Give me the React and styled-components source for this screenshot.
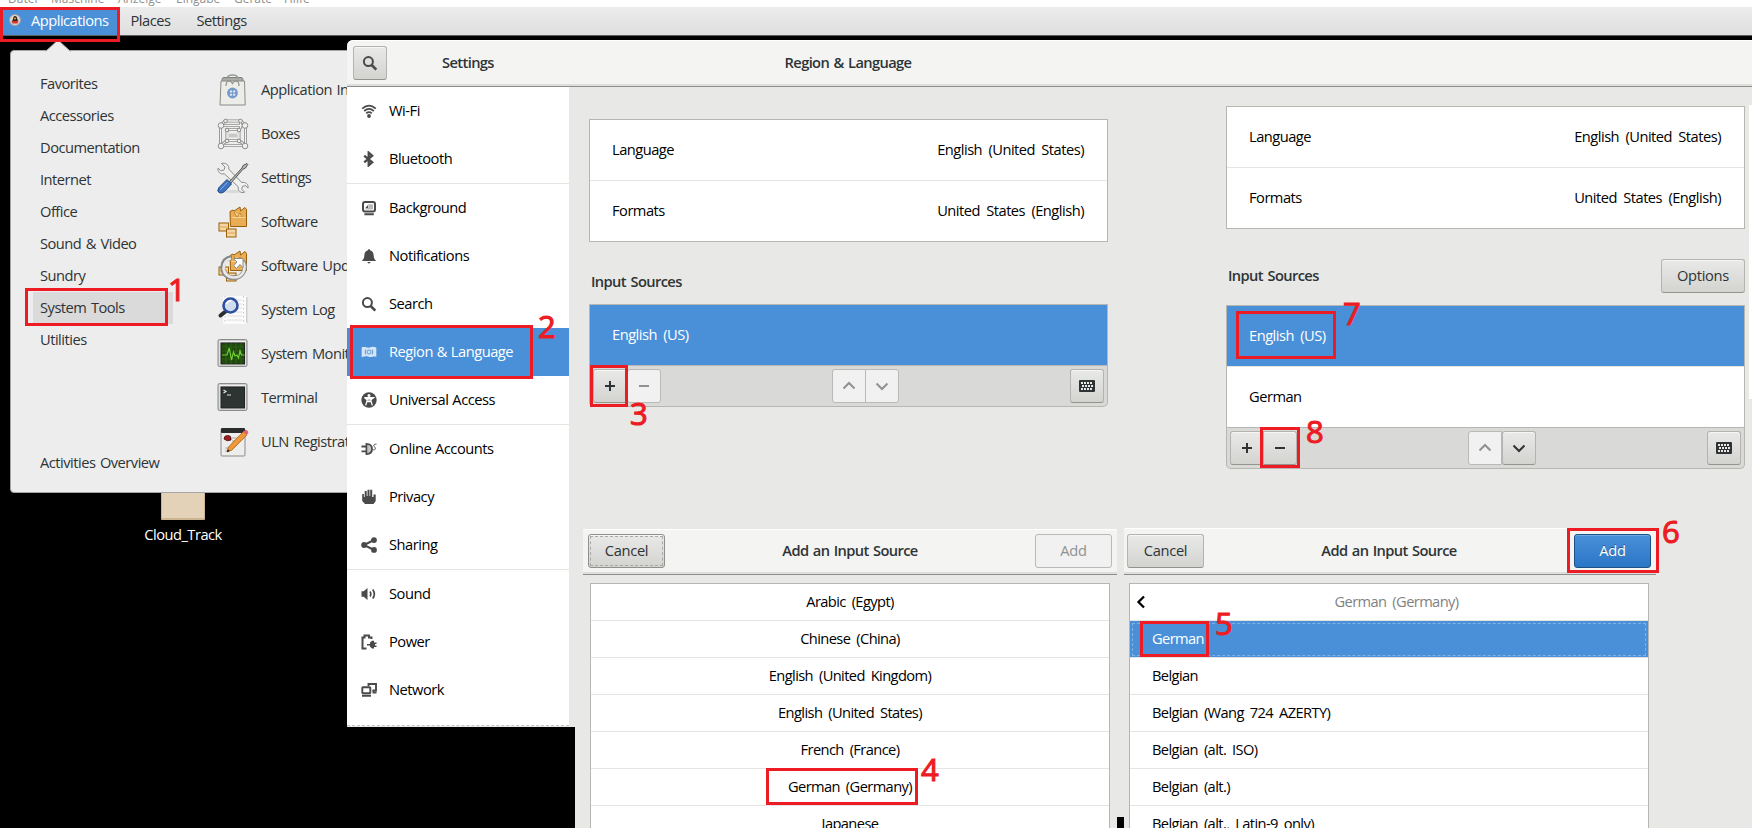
import React from "react";
import styled, { createGlobalStyle, css } from "styled-components";

const Global = createGlobalStyle`
  * { box-sizing: border-box; }
  body { margin: 0; background: #000; overflow: hidden; }
  svg { display: block; flex: none; }
`;

const BLUE = "#4a90d9";
const BG = "#e8e8e6";
const RED = "#ed1c24";

const Desktop = styled.div`
  position: relative;
  width: 1752px;
  height: 828px;
  overflow: hidden;
  background: #000;
  color: #2e3436;
  font: 14.67px/20px "Open Sans", "Noto Sans", sans-serif;
  letter-spacing: -0.5px;
  word-spacing: 1.2px;
  white-space: nowrap;
`;

/* Host window menu and desktop panel */
const HostMenu = styled.div`
  display: flex;
  gap: 16px;
  height: 7px;
  padding-left: 8px;
  overflow: hidden;
  background: #fff;
  color: #8f8f8f;
  font-size: 12px;
  line-height: 16px;
  letter-spacing: 0;
`;
const HostItem = styled.span`
  width: ${(p) => p.$w}px;
  margin-top: -9px;
`;
const TopBar = styled.div`
  display: flex;
  height: 29px;
  background: linear-gradient(#ececec, #dedede);
  border-bottom: 1px solid #5c5f5d;
`;
const TopItem = styled.div`
  display: flex;
  align-items: center;
  gap: 10px;
  height: 28px;
  padding: ${(p) => p.$pad};
  ${(p) => p.$active && css`background: ${BLUE}; color: #fff; margin-left: 2px;`}
`;

/* Applications menu */
const MenuPopup = styled.div`
  position: absolute;
  left: 10px;
  top: 50px;
  display: flex;
  width: 400px;
  height: 443px;
  background: #ededed;
  border: 1px solid #a5a5a3;
  border-radius: 4px;
`;
const MenuArrow = styled.svg`
  position: absolute;
  left: 34px;
  top: -12px;
`;
const Categories = styled.div`
  display: flex;
  flex-direction: column;
  width: 140px;
  margin-left: 22px;
  padding: 17px 0 13px;
`;
const Category = styled.div`
  height: 32px;
  padding-left: 7px;
  line-height: 30px;
  background: ${(p) => (p.$active ? "#d9dad9" : "transparent")};
  ${(p) => p.$last && css`margin-top: auto;`}
`;
const AppList = styled.div`
  padding: 17px 0 0 44px;
`;
const AppRow = styled.div`
  display: flex;
  align-items: center;
  gap: 12px;
  height: 44px;
`;
const Label = styled.span`
  margin-bottom: 2px;
`;

const Folder = styled.div`
  position: absolute;
  left: 133px;
  top: 480px;
  display: flex;
  flex-direction: column;
  align-items: center;
  gap: 4px;
  width: 100px;
  color: #fff;
`;
const FolderShape = styled.div`
  width: 44px;
  height: 40px;
  background: #e3d1b8;
  border: 1px solid #cdb491;
  border-bottom-width: 2px;
  border-radius: 1px;
`;

/* Settings window */
const SettingsWindow = styled.div`
  position: absolute;
  left: 347px;
  top: 40px;
  width: 1405px;
  height: 788px;
`;
const HeaderBar = styled.div`
  display: flex;
  align-items: center;
  height: 47px;
  padding: 0 6px;
  background: #f4f4f3;
  border-bottom: 1px solid #8e8e8b;
  box-shadow: inset 0 -2px #dededc, inset 0 1px #fff;
  border-radius: 6px 0 0 0;
`;
const Title = styled.div`
  font-weight: 600;
  letter-spacing: -0.62px;
  text-align: center;
  flex: ${(p) => (p.$w ? "none" : 1)};
  width: ${(p) => (p.$w ? p.$w + "px" : "auto")};
  margin-left: ${(p) => p.$ml || 0}px;
  margin-bottom: 2px;
`;
const Body = styled.div`
  display: flex;
  align-items: flex-start;
`;
const SideColumn = styled.div`
  width: 228px;
  height: 640px;
  padding-right: 6px;
  background: ${BG};
`;
const Sidebar = styled.div`
  height: 639px;
  background: #fff;
  border-bottom: 1px dashed #c4c4c2;
  letter-spacing: -0.47px;
  word-spacing: 0.5px;
`;
const SideItem = styled.div`
  display: flex;
  align-items: center;
  gap: 12px;
  height: ${(p) => (p.$sep ? 49 : 48)}px;
  padding-left: 14px;
  border-bottom: ${(p) => (p.$sep ? "1px solid #e4e4e3" : "none")};
  background: ${(p) => (p.$active ? BLUE : "#fff")};
  color: ${(p) => (p.$active ? "#fff" : "#000")};
`;
const SideIcon = styled.svg`
  color: ${(p) => (p.$active ? "#d6e6f8" : "#4a4a4a")};
`;
const Content = styled.div`
  display: flex;
  flex: 1;
  align-items: flex-start;
  justify-content: space-between;
  height: 741px;
  padding: 19px 0 0 14px;
  background: ${BG};
`;
const Panel = styled.div`
  width: 519px;
  margin-top: ${(p) => p.$mt || 0}px;
  word-spacing: 3px;
`;
const RightSide = styled.div`
  display: flex;
  gap: 4px;
`;
const NextShot = styled.div`
  width: 3px;
  height: 294px;
  margin-top: -1px;
  background: #fff;
`;
const Card = styled.div`
  background: #fff;
  border: 1px solid #b6b6b3;
`;
const CardRow = styled.div`
  display: flex;
  align-items: center;
  justify-content: space-between;
  height: ${(p) => (p.$sep ? 61 : 60)}px;
  padding: 0 23px 2px 22px;
  border-bottom: ${(p) => (p.$sep ? "1px solid #e4e4e3" : "none")};
  background: ${(p) => (p.$active ? BLUE : "#fff")};
  color: ${(p) => (p.$active ? "#fff" : "#000")};
`;
const SectionHead = styled.div`
  display: flex;
  align-items: center;
  justify-content: space-between;
  height: 34px;
  margin: ${(p) => p.$m};
  padding-left: 2px;
  font-weight: 600;
  letter-spacing: -0.6px;
  word-spacing: 1.2px;
`;
const ListBar = styled.div`
  display: flex;
  align-items: center;
  justify-content: space-between;
  height: 41px;
  padding: 0 3px;
  background: #d9d9d7;
  border: 1px solid #b6b6b3;
  border-top: 0;
  border-radius: 0 0 5px 5px;
`;
const Group = styled.div`
  display: flex;
  margin-left: ${(p) => p.$ml || 0}px;
`;
const BarSide = styled.div`
  display: flex;
  flex: 1;
  justify-content: ${(p) => (p.$end ? "flex-end" : "flex-start")};
`;
const Button = styled.div`
  display: flex;
  align-items: center;
  justify-content: center;
  width: ${(p) => p.$w || 34}px;
  height: 34px;
  padding-bottom: ${(p) => (p.$w ? 2 : 0)}px;
  font-weight: 400;
  letter-spacing: -0.3px;
  color: #2e3436;
  background: linear-gradient(#e9e9e8, #d3d3d0);
  border: 1px solid #b3b3af;
  border-bottom-color: #94948f;
  border-radius: 3px;
  box-shadow: inset 0 1px #f6f6f5;
  outline-offset: -3px;
  ${(p) => p.$focus && css`outline: 1px dashed #a9aaa7; border-color: #8f908c;`}
  ${(p) => p.$off && css`background: #f1f1f1; color: #8f9291; border-color: #b9b9b6; box-shadow: none;`}
  ${(p) => p.$primary && css`
    background: linear-gradient(#4a90d9, #2a76c6);
    color: #fff; border-color: #1c5187; box-shadow: inset 0 1px #6ea8e2;
    text-shadow: 0 -1px rgba(0, 0, 0, 0.4);`}
  ${Group} &:first-child { border-radius: 3px 0 0 3px; }
  ${Group} & + & { border-radius: 0 3px 3px 0; margin-left: -1px; }
`;

/* Dialogs */
const Dialog = styled.div`
  position: absolute;
  left: ${(p) => p.$x}px;
  top: 528px;
  width: ${(p) => p.$w}px;
  height: 300px;
`;
const DialogHeader = styled(HeaderBar)`
  height: ${(p) => (p.$short ? 46 : 47)}px;
  margin-top: ${(p) => (p.$short ? 1 : 0)}px;
  padding: ${(p) => (p.$short ? "0 5px 1px" : "0 5px 0 3px")};
  border-radius: 2px 2px 0 0;
`;
const DialogList = styled(Card)`
  width: 520px;
  height: 260px;
  margin: 8px 0 0 ${(p) => p.$ml}px;
  letter-spacing: -0.6px;
  word-spacing: 2.7px;
`;
const ListRow = styled.div`
  position: relative;
  display: flex;
  align-items: center;
  justify-content: ${(p) => (p.$left ? "flex-start" : "center")};
  height: 37px;
  padding-left: ${(p) => (p.$left ? 22 : p.$pl || 0)}px;
  padding-bottom: 2px;
  border-bottom: 1px solid #e4e4e3;
  color: ${(p) => (p.$active ? "#fff" : p.$dim ? "#7f8283" : "#000")};
  background: ${(p) => (p.$active ? BLUE : "transparent")};
  outline-offset: -3px;
  ${(p) => p.$active && css`outline: 1px dashed #80b1e4;`}
`;
const Back = styled.svg`
  position: absolute;
  left: 6px;
  top: 11px;
`;
const Sliver = styled.div`
  position: absolute;
  left: 1117px;
  top: 817px;
  width: 7px;
  height: 11px;
  background: #000;
`;

/* Step markers laid over the windows */
const Mark = styled.div`
  position: absolute;
  left: ${(p) => p.$x}px;
  top: ${(p) => p.$y}px;
  width: ${(p) => p.$w}px;
  height: ${(p) => p.$h}px;
  border: 3px solid ${RED};
`;
const Step = styled.div`
  position: absolute;
  left: ${(p) => p.$x}px;
  top: ${(p) => p.$y}px;
  color: ${RED};
  font-size: 31px;
  line-height: 32px;
  letter-spacing: 0;
  -webkit-text-stroke: 1.1px ${RED};
`;

const stroke = (w, extra) => ({ fill: "none", stroke: "currentColor", strokeWidth: w, ...extra });

const sideIcons = {
  wifi: (
    <g {...stroke(1.7)}>
      <path d="M1.2 5.6Q8 -0.4 14.8 5.6" />
      <path d="M3.2 8Q8 3.6 12.8 8" />
      <path d="M5.2 10.3Q8 7.9 10.8 10.3" />
      <circle cx="8" cy="13" r="1.9" fill="currentColor" stroke="none" />
    </g>
  ),
  bluetooth: <path d="M3.2 4.6L11.2 11.3L7.7 14.3V1.7L11.2 4.7L3.2 11.4" {...stroke(2.3)} />,
  background: (
    <>
      <rect x="2" y="2" width="12" height="9.6" rx="2" {...stroke(2)} />
      <path d="M7.3 4.3h4.7v5.2H4.4V8h2.9z" fill="#b9b9b9" />
      <path d="M4.4 8L7 5v3zM3.4 13.3h9.4v2H3.4z" fill="currentColor" />
    </>
  ),
  bell: <path d="M8 1.3c.9 0 1.3.6 1.4 1.2C12 3.3 12.6 5.500 12.700 8c.1 2 .8 3.200 2 4.200v.8H1.300v-.8c1.200-1 1.900-2.200 2-4.200.1-2.500.7-4.700 3.300-5.500C6.700 1.900 7.100 1.300 8 1.300zM6.500 14h3c0 .8-.6 1.400-1.500 1.400S6.500 14.800 6.500 14z" fill="currentColor" />,
  search: (
    <g {...stroke(2)}>
      <circle cx="6.4" cy="6.600" r="4.500" />
      <path d="M9.700 10l4.600 4.600" strokeWidth="2.600" />
    </g>
  ),
  region: (
    <>
      <path d="M.7 3.500c3-1.400 5 1 8 0 2.400-.9 4.400-.8 6.600 0v9.300c-3-1.200-4.500.8-7.500 0-2.500-.8-4.600-.6-7.100.5z" fill="currentColor" />
      <g fill="none" stroke="#5c99da" strokeWidth="1">
        <circle cx="8" cy="8" r="2" />
        <path d="M4.800 5.500Q3.400 8 4.800 10.500M11.200 5.500Q12.600 8 11.200 10.500" />
      </g>
    </>
  ),
  access: (
    <>
      <circle cx="8" cy="8" r="7.700" fill="currentColor" />
      <circle cx="8" cy="3.500" r="1.500" fill="#fff" />
      <path d="M3.400 5.600h9.200L9.700 7.900l1.600 5.500M8 5.800v3.400M6.300 7.900l-1.600 5.500M3.400 5.600l2.900 2.300M6.200 6.500h3.600v3.200H6.200z" fill="none" stroke="#fff" strokeWidth="1.300" />
    </>
  ),
  online: (
    <>
      <path d="M5 2.300c5 0 6.800 2.600 6.800 5.700S10 13.700 5 13.700z" fill="#c4c4c4" />
      <path d="M5.400 2v12M5.400 3c4 0 5.600 2.200 5.600 5s-1.600 5-5.600 5" {...stroke(1.700)} />
      <path d="M.5 5.500h4.500M.5 10.300h4.500" {...stroke(1.800)} />
      <path d="M15.500 3.200c-4-.2-2.700 2-1.700 3 1.300 1.500.5 2.800-1.600 2.700" {...stroke(1)} />
    </>
  ),
  privacy: <path d="M1.200 5h1.700v3h.8V2h2v5h.8V.8h2V7h.7V.8h2V8h1.300V5.500h2.200v6.500L12.500 15H4L1.200 12z" fill="currentColor" />,
  share: (
    <>
      <path d="M13 3L3 8l10 5" {...stroke(2)} />
      <g fill="currentColor"><circle cx="13" cy="3.100" r="2.900" /><circle cx="3.100" cy="8" r="2.900" /><circle cx="13" cy="12.900" r="2.900" /></g>
    </>
  ),
  sound: (
    <>
      <path d="M.5 5.300h2.200L6.500 2v12L2.700 10.700H.5z" fill="currentColor" />
      <path d="M9 5.500q1.600 2.500 0 5M11.700 3.400q3.300 4.600 0 9.200" {...stroke(1.700)} />
    </>
  ),
  power: (
    <>
      <path d="M5.500 14.500H1.500V3.500H3.500V1.500H8V3.500h2.500V5" {...stroke(2)} />
      <path d="M6 9.900h3V8.500l2-1.700h2v1.600h2.500v1.500H14v1.500h1.500v1.500H13v1.600h-2l-2-1.700v-1.400H6z" fill="currentColor" />
    </>
  ),
  network: (
    <g {...stroke(1.900)}>
      <path d="M7.500 4V2H15v6.500h-3.500" />
      <rect x="1.300" y="5.200" width="8" height="6" rx=".6" />
      <path d="M1 13.800h9M12.500 8v2.500h3" />
    </g>
  ),
};

const sideItems = [
  ["wifi", "Wi-Fi"],
  ["bluetooth", "Bluetooth", true],
  ["background", "Background"],
  ["bell", "Notifications"],
  ["search", "Search"],
  ["region", "Region & Language"],
  ["access", "Universal Access", true],
  ["online", "Online Accounts"],
  ["privacy", "Privacy"],
  ["share", "Sharing", true],
  ["sound", "Sound"],
  ["power", "Power"],
  ["network", "Network"],
];

const packageBoxes = (
  <g stroke="#9a5e08" strokeWidth="1">
    <path d="M13 5.500l3-1.500 1 1 6-4 .5 4 4.500-3.500 1.500 2V20.500H13.500z" fill="#e9ad55" />
    <path d="M14.500 11.500h14" stroke="#f6d49a" />
    <path d="M17 6l3 5 3-4 2 4" fill="#f9e3bd" stroke="#c07f1c" />
    <rect x="2" y="17" width="9.500" height="8" fill="#f3d6a4" />
    <rect x="9.500" y="23" width="9.500" height="8" fill="#f3d6a4" />
    <path d="M3 21h7.500M10.500 27h7.500" stroke="#e0a44a" />
  </g>
);
const monitor = (fill) => (
  <>
    <rect x="1" y="1.500" width="29" height="27" rx="1.500" fill="#cfcfcf" stroke="#8a8c88" />
    <rect x="3" y="3.500" width="25" height="23" fill="none" stroke="#efefef" />
    <rect x="4" y="5" width="23.500" height="21" fill={fill} stroke="#222" />
  </>
);

const appIcons = {
  installer: (
    <>
      <rect x="5" y="3.500" width="21" height="6" rx="2" fill="#a9aba7" stroke="#7f817d" />
      <path d="M10 5q0-4 5.500-4T21 5" fill="none" stroke="#9a9c98" strokeWidth="1.500" />
      <path d="M4 7h23.500l.7 24H3z" fill="#ecece9" stroke="#8b8d88" />
      <path d="M9 12q0-5 3-5 2 0 3.500 2.500Q17 7 19 7q3 0 3 5" fill="none" stroke="#8b8d88" strokeWidth="1.200" />
      <circle cx="15.500" cy="19" r="5.400" fill="#7499cc" />
      <path d="M13.200 16.700h1.500v1.500h-1.500zM16.400 16.700h1.500v1.500h-1.500zM13.200 19.900h1.500v1.500h-1.500zM16.400 19.900h1.500v1.500h-1.500z" fill="#e8eef8" stroke="#e8eef8" strokeWidth=".5" />
    </>
  ),
  boxes: (
    <>
      <g fill="none" stroke="#8c8d8b" strokeWidth="3"><path d="M3.500 7.500h25v20h-25zM8 3h15.500v8M8 3l-4 4M24 3l4 4M10 11.500h12v11H10zM3.500 27.500l6.500-5M28.500 27.500l-6.500-5" /></g>
      <g fill="none" stroke="#f3f3f2" strokeWidth="1.300"><path d="M3.500 7.500h25v20h-25zM8 3h15.500v8M8 3l-4 4M24 3l4 4M10 11.500h12v11H10zM3.500 27.500l6.500-5M28.500 27.500l-6.500-5" /></g>
      <rect x="11" y="15" width="10" height="5" fill="#c8c9c7" stroke="#f3f3f2" />
      <g fill="#efefee" stroke="#8c8d8b"><circle cx="4" cy="7.500" r="2.800" /><circle cx="28" cy="7.500" r="2.800" /><circle cx="4" cy="28" r="2.800" /><circle cx="28" cy="28" r="2.800" /><circle cx="8.500" cy="3" r="1.800" /><circle cx="23.500" cy="3" r="1.800" /><circle cx="10" cy="12" r="1.800" /><circle cx="22" cy="12" r="1.800" /><circle cx="10" cy="23" r="1.800" /><circle cx="22" cy="23" r="1.800" /></g>
    </>
  ),
  settings: (
    <>
      <ellipse cx="16" cy="29.500" rx="13" ry="1.500" fill="#d8d8d8" />
      <path d="M4.500 1.500L8 5l-1 3-3.200.8L1 6.200c-.6 3.500 2.200 6.600 6.300 5.600l14 13c-.8 4 2.500 6.600 6.200 5.500l-2.800-3 .8-3 3.200-.7 2.300 2.500c.8-3.800-2.600-6.500-6.300-5.600l-13-13.500C12.400 3 8.500.3 4.500 1.500z" fill="#f0f0ef" stroke="#8a8c89" />
      <path d="M12 20L25 6l1-2.500L30 1.500l.8.8L28.500 6 26 7.200 13.500 21.500z" fill="#b5b7b4" stroke="#555855" />
      <path d="M10 17.500l4.500 4.500-7 7.500q-3 2.500-5.500 1t0-5z" fill="#3f75c0" stroke="#1f4684" />
      <path d="M3.500 27.500l7-7.300" stroke="#8fb4e6" />
    </>
  ),
  software: packageBoxes,
  updates: (
    <>
      {packageBoxes}
      <path d="M20 26.500c-6 3.500-15-1-14.500-9.500C6 11 10 8 15 7.500" fill="none" stroke="#84868a" strokeWidth="4.400" />
      <path d="M26 11c4.500 7 0 17.500-10 17-5-.3-9-4.500-9.500-9" fill="none" stroke="#8e908d" strokeWidth="4.400" />
      <path d="M26 12c4 7-.5 16-10 15.500-5-.3-9-4-9.500-9C6.300 13 10 9 14 8.500" fill="none" stroke="#e9e9e8" strokeWidth="2.600" />
      <path d="M16.500 8.500h9.500v9l-3-3-3.500 4-2.800-2.800L20 12z" fill="#fff" stroke="#8a8c89" />
    </>
  ),
  log: (
    <>
      <rect x="6" y="2" width="24" height="28" fill="#fbfbfb" />
      <path d="M8 2v28M26.500 2v28" stroke="#c6c6c6" strokeDasharray="1.500 2.500" />
      <path d="M10 6h15M10 10h15M10 14h15M10 18h15M10 22h15M10 26h15" stroke="#dedede" />
      <path d="M29.800 3v26" stroke="#bcbcbc" />
      <path d="M8.500 17.500l-5 4" stroke="#2b2e2c" strokeWidth="4" strokeLinecap="round" />
      <circle cx="13.500" cy="11.500" r="7" fill="#cfdcec" stroke="#2e4d9e" strokeWidth="2.600" />
      <path d="M9.500 10q1.500-3.500 5-3.500" fill="none" stroke="#fff" strokeWidth="1.500" />
    </>
  ),
  monitor: (
    <>
      {monitor("#1e4a0d")}
      <path d="M5 9h22M5 13h22M5 21h22M9 5v21M14 5v21M19 5v21M24 5v21" stroke="#2e6417" strokeWidth=".8" />
      <path d="M5 17h5l2.200-7 2.300 12 2-8 1.500 4 2-1 1.500 3 1.500-7 1.500 4h3" fill="none" stroke="#6fce34" strokeWidth="1.200" />
    </>
  ),
  terminal: (
    <>
      {monitor("#2d3533")}
      <path d="M6.500 8l2.500 1.500L6.500 11M10 13h4" fill="none" stroke="#dfe3e1" strokeWidth="1.200" />
    </>
  ),
  uln: (
    <>
      <rect x="4" y="3" width="24" height="27" rx="1" fill="#ededec" stroke="#8b8d8a" />
      <rect x="4" y="2" width="24" height="5" rx="1" fill="#2a2c2b" />
      <path d="M15 12h9M15 15h7M8 22h6M8 25h4" stroke="#a9aaa8" />
      <path d="M7 13q0-3.500 3.500-3.500T14 12v2q-4 2-7-1z" fill="#a21a22" stroke="#300" strokeWidth=".7" />
      <path d="M10 26l1.500-5L26.500 5.500l3.500 3.300L15 24z" fill="#f0993a" stroke="#a85c10" strokeWidth=".8" />
      <path d="M26 6l2-1.800q1.200-.8 2.600.5t.4 2.500l-1.500 1.800z" fill="#e2626c" />
      <path d="M10 26l.8-2.700 1.900 1.800z" fill="#111" />
    </>
  ),
};

const apps = [
  ["installer", "Application Installer"],
  ["boxes", "Boxes"],
  ["settings", "Settings"],
  ["software", "Software"],
  ["updates", "Software Update"],
  ["log", "System Log"],
  ["monitor", "System Monitor"],
  ["terminal", "Terminal"],
  ["uln", "ULN Registration"],
];
const categories = ["Favorites", "Accessories", "Documentation", "Internet", "Office", "Sound & Video", "Sundry", "System Tools", "Utilities"];

const Glyph = ({ d }) => (
  <svg width="16" height="16" viewBox="0 0 16 16"><path d={d} fill="none" stroke="currentColor" strokeWidth="2" /></svg>
);
const PLUS = "M8 3v10M3 8h10";
const MINUS = "M3 8h10";
const UP = "M2.500 10.500L8 5l5.500 5.500";
const DOWN = "M2.500 5.500L8 11l5.500-5.500";
const Keyboard = () => (
  <svg width="16" height="16" viewBox="0 0 16 16">
    <rect x="0" y="2" width="16" height="12" rx="1" fill="currentColor" />
    <path d="M2 5h12M3 8h11M2 11h12" stroke="#e9e9e8" strokeWidth="1.800" strokeDasharray="2 1" />
  </svg>
);

const LocaleCard = () => (
  <Card>
    <CardRow $sep><span>Language</span><span>English (United States)</span></CardRow>
    <CardRow><span>Formats</span><span>United States (English)</span></CardRow>
  </Card>
);
const SourceBar = ({ many }) => (
  <ListBar>
    <BarSide>
      <Group><Button><Glyph d={PLUS} /></Button><Button $off={!many}><Glyph d={MINUS} /></Button></Group>
    </BarSide>
    <Group $ml={33}><Button $off><Glyph d={UP} /></Button><Button $off={!many}><Glyph d={DOWN} /></Button></Group>
    <BarSide $end><Button><Keyboard /></Button></BarSide>
  </ListBar>
);

export default function App() {
  return (
    <Desktop>
      <Global />
      <HostMenu>
        <HostItem $w={27}>Datei</HostItem>
        <HostItem $w={51}>Maschine</HostItem>
        <HostItem $w={42}>Anzeige</HostItem>
        <HostItem $w={42}>Eingabe</HostItem>
        <HostItem $w={34}>Geräte</HostItem>
        <HostItem $w={26}>Hilfe</HostItem>
      </HostMenu>
      <TopBar>
        <TopItem $active $pad="0 10px 2px 7px">
          <svg width="12" height="12" viewBox="0 0 12 12">
            <circle cx="6" cy="6" r="5.500" fill="#d8d5d2" stroke="#a89f9a" strokeWidth=".8" />
            <path d="M4 5.500Q4 2 6 2t2.300 3l1 1.500-3.300 1-3-.5z" fill="#2b2320" />
            <path d="M2.500 7h7L8.500 9.500h-5z" fill="#d8342a" />
            <circle cx="6" cy="4.600" r="1" fill="#f0a040" />
          </svg>
          Applications
        </TopItem>
        <TopItem $pad="0 0 2px 12px">Places</TopItem>
        <TopItem $pad="0 0 2px 26px">Settings</TopItem>
      </TopBar>

      <Folder><FolderShape />Cloud_Track</Folder>

      <MenuPopup>
        <MenuArrow width="26" height="13"><path d="M.5 12.500L13 1l12.500 11.500" fill="#ededed" stroke="#a5a5a3" /></MenuArrow>
        <Categories>
          {categories.map((c) => <Category key={c} $active={c === "System Tools"}>{c}</Category>)}
          <Category $last>Activities Overview</Category>
        </Categories>
        <AppList>
          {apps.map(([icon, label]) => (
            <AppRow key={icon}>
              <svg width="32" height="32" viewBox="0 0 32 32">{appIcons[icon]}</svg>
              <Label>{label}</Label>
            </AppRow>
          ))}
        </AppList>
      </MenuPopup>

      <SettingsWindow>
        <HeaderBar>
          <Button><SideIcon as="svg" width="16" height="16" viewBox="0 0 16 16">{sideIcons.search}</SideIcon></Button>
          <Title $w={100} $ml={31}>Settings</Title>
          <Title $w={200} $ml={230}>Region &amp; Language</Title>
        </HeaderBar>
        <Body>
          <SideColumn>
            <Sidebar>
              {sideItems.map(([icon, label, sep]) => (
                <SideItem key={icon} $sep={sep} $active={icon === "region"}>
                  <SideIcon width="16" height="16" viewBox="0 0 16 16" $active={icon === "region"}>{sideIcons[icon]}</SideIcon>
                  <Label>{label}</Label>
                </SideItem>
              ))}
            </Sidebar>
          </SideColumn>
          <Content>
            <Panel $mt={13}>
              <LocaleCard />
              <SectionHead $m="22px 0 6px">Input Sources</SectionHead>
              <Card><CardRow $active>English (US)</CardRow></Card>
              <SourceBar />
            </Panel>
            <RightSide>
              <Panel>
                <LocaleCard />
                <SectionHead $m="30px 0 12px"><Label>Input Sources</Label><Button $w={84}>Options</Button></SectionHead>
                <Card>
                  <CardRow $sep $active>English (US)</CardRow>
                  <CardRow>German</CardRow>
                </Card>
                <SourceBar many />
              </Panel>
              <NextShot />
            </RightSide>
          </Content>
        </Body>
      </SettingsWindow>

      <Dialog $x={583} $w={534}>
        <DialogHeader $short>
          <Button $w={77} $focus>Cancel</Button>
          <Title>Add an Input Source</Title>
          <Button $w={77} $off>Add</Button>
        </DialogHeader>
        <DialogList $ml={7}>
          {["Arabic (Egypt)", "Chinese (China)", "English (United Kingdom)", "English (United States)", "French (France)", "German (Germany)", "Japanese"].map((t) => (
            <ListRow key={t}>{t}</ListRow>
          ))}
        </DialogList>
      </Dialog>
      <Dialog $x={1124} $w={532}>
        <DialogHeader>
          <Button $w={77}>Cancel</Button>
          <Title>Add an Input Source</Title>
          <Button $w={77} $primary>Add</Button>
        </DialogHeader>
        <DialogList $ml={5}>
          <ListRow $dim $pl={15}>
            <Back width="10" height="14" viewBox="0 0 10 14"><path d="M8 1.500L2.500 7 8 12.500" fill="none" stroke="#000" strokeWidth="2.300" /></Back>
            German (Germany)
          </ListRow>
          <ListRow $left $active>German</ListRow>
          {["Belgian", "Belgian (Wang 724 AZERTY)", "Belgian (alt. ISO)", "Belgian (alt.)", "Belgian (alt., Latin-9 only)"].map((t) => (
            <ListRow key={t} $left>{t}</ListRow>
          ))}
        </DialogList>
      </Dialog>
      <Sliver />

      <Mark $x={0} $y={7} $w={120} $h={35} />
      <Mark $x={25} $y={288} $w={143} $h={38} />
      <Mark $x={350} $y={325} $w={183} $h={54} />
      <Mark $x={590} $y={365} $w={38} $h={42} />
      <Mark $x={766} $y={768} $w={152} $h={37} />
      <Mark $x={1140} $y={621} $w={69} $h={36} />
      <Mark $x={1567} $y={528} $w={92} $h={45} />
      <Mark $x={1236} $y={311} $w={100} $h={48} />
      <Mark $x={1260} $y={427} $w={40} $h={41} />
      <Step $x={168} $y={273}>1</Step>
      <Step $x={538} $y={310}>2</Step>
      <Step $x={630} $y={397}>3</Step>
      <Step $x={921} $y={753}>4</Step>
      <Step $x={1215} $y={607}>5</Step>
      <Step $x={1662} $y={515}>6</Step>
      <Step $x={1343} $y={297}>7</Step>
      <Step $x={1306} $y={415}>8</Step>
    </Desktop>
  );
}
